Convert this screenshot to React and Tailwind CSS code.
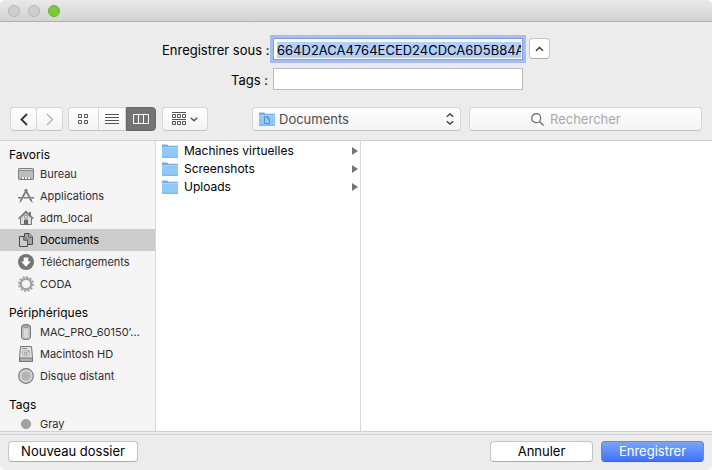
import { useState } from "react";

const DesktopIcon = () => (
  <svg width="16" height="16" viewBox="0 0 16 16">
    <rect x="0.5" y="2.5" width="15" height="11" rx="0.6" fill="#bdbdbd" stroke="#7c7c7c" />
    <path d="M1 3.5h14" stroke="#dcdcdc" />
    <path d="M1 4.5h14" stroke="#8a8a8a" />
    <path d="M3 11h10v2H3z" fill="#858585" />
    <path d="M4 11h2v2h-2zM7 11h2v2h-2zM10 11h2v2h-2z" fill="#f0f0f0" />
  </svg>
);

const ApplicationsIcon = () => (
  <svg width="16" height="16" viewBox="0 0 16 16" fill="none" stroke="#7c7c7c">
    <path d="M8.4 2L2.6 13M7.6 2l5.8 11" strokeWidth="1.8" />
    <path d="M0 9.8h3.4M5.6 9.8h5M12.8 9.8H16" strokeWidth="1.6" />
    <path d="M2.6 13l-1 1.7M13.4 13l1 1.7" strokeWidth="1" />
    <circle cx="8" cy="2.4" r="1.1" fill="#7c7c7c" />
  </svg>
);

const HomeIcon = () => (
  <svg width="16" height="16" viewBox="0 0 16 16" fill="none" stroke="#757575">
    <path d="M2.5 8v6.5h11V8L8 2.6z" fill="#dedede" />
    <path d="M12 2v4" strokeWidth="2" />
    <path d="M0.5 8.7L8 1.5l7.5 7.2" strokeWidth="1.3" />
    <circle cx="8" cy="6.7" r="1.5" fill="#f5f5f5" strokeWidth="0.9" />
    <path d="M6 9.5h4v5H6z" fill="#686868" stroke="none" />
  </svg>
);

const DocumentsIcon = () => (
  <svg width="16" height="16" viewBox="0 0 16 16" fill="#a4a4a4" stroke="#4c4c4c">
    <path d="M6.5 1.5h4.6l3.4 3.3v7.7h-8z" />
    <path d="M10.8 1.5v3.7h3.7" fill="#d0d0d0" />
    <path d="M1.5 4.5h4.6l3.4 3.3v6.7h-8z" fill="#cdcdcd" />
    <path d="M5.8 4.5v3.7h3.7" fill="#a4a4a4" />
  </svg>
);

const DownloadsIcon = () => (
  <svg width="16" height="16" viewBox="0 0 16 16">
    <circle cx="8" cy="8" r="8" fill="#757575" />
    <path d="M5.7 3.5h4.6v4h2.6L8 12.8 3.1 7.5h2.6z" fill="#fff" />
  </svg>
);

const GearIcon = () => (
  <svg width="16" height="16" viewBox="0 0 16 16" fill="none" stroke="#a3a3a3">
    <circle cx="8" cy="8" r="5.3" strokeWidth="2.4" />
    <circle cx="8" cy="8" r="7.1" strokeWidth="1.8" strokeDasharray="2.1 1.617" />
  </svg>
);

const ComputerIcon = () => (
  <svg width="16" height="16" viewBox="0 0 16 16" stroke="#757575">
    <path d="M3.5 2.5q0-2 4.5-2t4.5 2v11q0 2-4.5 2t-4.5-2z" fill="#c2c2c2" />
    <ellipse cx="8" cy="2.5" rx="3.6" ry="1.1" fill="#b4b4b4" stroke="#8a8a8a" strokeWidth="0.8" />
    <path d="M6 4.5h4v9H6z" fill="#d8d8d8" stroke="none" />
  </svg>
);

const HardDriveIcon = () => (
  <svg width="16" height="16" viewBox="0 0 16 16" fill="none" stroke="#777">
    <path d="M2.5 0.5h11l1 11v4h-13v-4z" fill="#e0e0e0" />
    <path d="M1.5 12h13v3.5h-13z" fill="#a8a8a8" />
    <path d="M3.5 13.8h9" stroke="#d0d0d0" strokeDasharray="1 1" />
    <path d="M4 2.5h5" strokeWidth="0.8" />
    <ellipse cx="8" cy="7.2" rx="4" ry="3" stroke="#aaa" strokeWidth="0.8" />
    <ellipse cx="7.6" cy="7.4" rx="1.6" ry="1.2" stroke="#888" strokeWidth="0.8" />
    <path d="M9 6.4l2.4-2" stroke="#888" strokeWidth="0.8" />
  </svg>
);

const DiscIcon = () => (
  <svg width="16" height="16" viewBox="0 0 16 16" fill="none" stroke="#777">
    <circle cx="8" cy="8" r="7.4" fill="#d2d2d2" strokeWidth="1.1" />
    <circle cx="8" cy="8" r="4" stroke="#999" strokeWidth="0.8" />
    <circle cx="8" cy="8" r="2.2" fill="#e8e8e8" stroke="#888" strokeWidth="0.9" />
    <circle cx="8" cy="8" r="0.7" strokeWidth="0.7" />
  </svg>
);

const TagIcon = () => (
  <svg width="16" height="16" viewBox="0 0 16 16">
    <circle cx="8" cy="8" r="4.6" fill="#a2a2a5" stroke="#8f8f92" strokeWidth="0.8" />
  </svg>
);

const FolderIcon = ({ withDocument }) => (
  <svg width="16" height="16" viewBox="0 0 16 16" className="shrink-0">
    <path d="M0 14V2.2Q0 1.4 .8 1.4h4.4l1.2 1.4h8.8q.8 0 .8.8V14z" fill="#6cb0e6" />
    <path d="M0 4h16v10H0z" fill="#90c8f8" />
    <path d="M0 4.5h16" stroke="#a9d6fb" />
    <path d="M0 14.4h16" stroke="#68a5d8" strokeWidth="0.9" />
    {withDocument && (
      <path d="M5.5 5.5h3l2 2v5h-5zM8.3 5.5v2.3h2.2" fill="none" stroke="#4b8fcb" strokeWidth="0.9" />
    )}
  </svg>
);

const sections = [
  {
    title: "Favoris",
    items: [
      { name: "Bureau", Icon: DesktopIcon },
      { name: "Applications", Icon: ApplicationsIcon },
      { name: "adm_local", Icon: HomeIcon },
      { name: "Documents", Icon: DocumentsIcon },
      { name: "Téléchargements", Icon: DownloadsIcon },
      { name: "CODA", Icon: GearIcon },
    ],
  },
  {
    title: "Périphériques",
    items: [
      { name: "MAC_PRO_60150’…", Icon: ComputerIcon },
      { name: "Macintosh HD", Icon: HardDriveIcon },
      { name: "Disque distant", Icon: DiscIcon },
    ],
  },
  {
    title: "Tags",
    items: [{ name: "Gray", Icon: TagIcon }],
  },
];

const folders = ["Machines virtuelles", "Screenshots", "Uploads"];

const toolButton =
  "flex h-6 items-center justify-center rounded-[4px] border border-[#d6d6d6] border-b-[#c4c4c4] bg-linear-to-b from-white to-[#f4f4f4]";

function TitleBar() {
  return (
    <header className="flex h-[22px] shrink-0 items-center gap-2 border-b border-[#b1b1b1] bg-linear-to-b from-[#e9e9e9] to-[#d2d2d2] px-2">
      <button aria-label="Fermer" className="size-3 rounded-full border border-[#b4b4b4] bg-[#cecece]" />
      <button aria-label="Réduire" className="size-3 rounded-full border border-[#b4b4b4] bg-[#cecece]" />
      <button aria-label="Agrandir" className="size-3 rounded-full border border-[#68b030] bg-[#78cb3b]" />
    </header>
  );
}

function NameForm() {
  const [name, setName] = useState("664D2ACA4764ECED24CDCA6D5B84A");
  const [tags, setTags] = useState("");

  return (
    <div className="flex flex-col gap-1.5 pt-4">
      <div className="flex justify-center">
        <label htmlFor="name" className="w-[106px] text-right leading-6 whitespace-nowrap">
          Enregistrer sous :
        </label>
        <div className="ml-[5px] h-[22px] w-[250px] border border-[#7f9fdc] bg-white ring-3 ring-[#a5bdf3]">
          <input
            id="name"
            value={name}
            onChange={(e) => setName(e.target.value)}
            className="block h-5 w-full bg-[#b3d0fd] bg-clip-content pt-[3px] pr-px pb-px pl-[3px] outline-none"
          />
        </div>
        <button
          aria-label="Réduire la fenêtre"
          className="ml-1.5 flex h-[21px] w-[21px] items-center justify-center rounded-[4px] border border-[#c6c6c6] border-b-[#adadad] bg-white"
        >
          <svg width="9" height="6" viewBox="0 0 9 6" fill="none" stroke="#333" strokeWidth="1.4">
            <path d="M1 4.8l3.5-3.3L8 4.8" />
          </svg>
        </button>
      </div>
      <div className="flex items-start justify-center pr-[27px]">
        <label htmlFor="tags" className="w-[106px] text-right leading-6">
          Tags :
        </label>
        <input
          id="tags"
          value={tags}
          onChange={(e) => setTags(e.target.value)}
          className="ml-[5px] h-[22px] w-[250px] border border-[#bcbcbc] bg-white px-1 outline-none"
        />
      </div>
    </div>
  );
}

function Toolbar() {
  return (
    <div className="flex px-2.5 pt-[15px] pb-[9px]">
      <button aria-label="Précédent" className={`${toolButton} w-[27px]`}>
        <svg width="8" height="13" viewBox="0 0 8 13" fill="none" stroke="#333" strokeWidth="1.8">
          <path d="M7 1L1.5 6.5 7 12" />
        </svg>
      </button>
      <button aria-label="Suivant" className={`${toolButton} -ml-px w-[27px]`}>
        <svg width="8" height="13" viewBox="0 0 8 13" fill="none" stroke="#b9b9b9" strokeWidth="1.5">
          <path d="M1 1l5.5 5.5L1 12" />
        </svg>
      </button>

      <div className="ml-[5px] flex">
        <button aria-label="Icônes" className={`${toolButton} w-[31px] rounded-r-none`}>
          <svg width="11" height="10" viewBox="0 0 11 10" fill="none" stroke="#555">
            <path d="M.5.5h3v3h-3zM6.5.5h3v3h-3zM.5 6.5h3v3h-3zM6.5 6.5h3v3h-3z" />
          </svg>
        </button>
        <button aria-label="Liste" className={`${toolButton} -ml-px w-7 rounded-none`}>
          <svg width="14" height="10" viewBox="0 0 14 10" stroke="#555">
            <path d="M0 .5h14M0 3.5h14M0 6.5h14M0 9.5h14" />
          </svg>
        </button>
        <button
          aria-label="Colonnes"
          aria-pressed="true"
          className="flex h-6 w-[30px] items-center justify-center rounded-r-[4px] border border-[#686868] bg-[#737373]"
        >
          <svg width="16" height="10" viewBox="0 0 16 10" fill="none" stroke="#fff">
            <path d="M.5.5h15v9H.5zM5.5.5v9M10.5.5v9" />
          </svg>
        </button>
      </div>

      <button aria-label="Grouper" className={`${toolButton} ml-1.5 w-[46px] gap-1`}>
        <svg width="14" height="14" viewBox="0 0 14 14" fill="none" stroke="#555">
          <path d="M0 .5h14M0 7.5h14" />
          <path d="M.5 2.5h3v3h-3zM5.5 2.5h3v3h-3zM10.5 2.5h3v3h-3z" />
          <path d="M.5 9.5h3v3h-3zM5.5 9.5h3v3h-3zM10.5 9.5h3v3h-3z" />
        </svg>
        <svg width="8" height="5" viewBox="0 0 8 5" fill="none" stroke="#555" strokeWidth="1.5">
          <path d="M.8.8L4 3.8 7.2.8" />
        </svg>
      </button>

      <div className={`${toolButton} ml-11 w-[209px] px-1.5`}>
        <FolderIcon withDocument />
        <select
          aria-label="Emplacement"
          defaultValue="Documents"
          className="ml-1 min-w-0 flex-1 appearance-none bg-transparent pt-0.5 text-[#4b4b4b] outline-none"
        >
          <option>Documents</option>
        </select>
        <svg width="8" height="12" viewBox="0 0 8 12" fill="none" stroke="#444" strokeWidth="1.4">
          <path d="M.8 3.8L4 .9l3.2 2.9M.8 8.2L4 11.1l3.2-2.9" />
        </svg>
      </div>

      <div className={`${toolButton} ml-2 min-w-0 flex-1 gap-1.5`}>
        <svg width="13" height="13" viewBox="0 0 13 13" fill="none" stroke="#666" strokeWidth="1.2">
          <circle cx="5.2" cy="5.2" r="4.5" />
          <path d="M8.5 8.5l4 4" />
        </svg>
        <input
          type="search"
          aria-label="Rechercher"
          placeholder="Rechercher"
          className="w-[90px] bg-transparent pt-0.5 outline-none placeholder:text-[#a9a9a9]"
        />
      </div>
    </div>
  );
}

function Sidebar({ selected, onSelect }) {
  return (
    <nav className="flex w-[156px] shrink-0 flex-col gap-2.5 overflow-hidden border-r border-[#d9d9d9] bg-[#f5f5f5] pt-1.5">
      {sections.map(({ title, items }) => (
        <section key={title} className="shrink-0">
          <h2 className="pl-[9px] text-[12px] leading-4">{title}</h2>
          <ul>
            {items.map(({ name, Icon }) => (
              <li key={name}>
                <button
                  onClick={() => onSelect(name)}
                  className={`flex h-[22px] w-full items-center gap-1.5 pl-[18px] text-[11px] whitespace-nowrap ${
                    selected === name ? "bg-[#cdcdcd] text-black" : "text-[#2e2e2e]"
                  }`}
                >
                  <Icon />
                  {name}
                </button>
              </li>
            ))}
          </ul>
        </section>
      ))}
    </nav>
  );
}

export default function App() {
  const [selected, setSelected] = useState("Documents");

  return (
    <div className="h-screen bg-white">
      <div className="flex h-full flex-col overflow-hidden rounded-[5px] bg-[#ececec] font-['Inter','Liberation_Sans',sans-serif] text-[13px] text-black">
        <TitleBar />
        <NameForm />
        <Toolbar />

        <main className="flex min-h-0 flex-1 border-y border-[#d0d0d0] bg-white">
          <Sidebar selected={selected} onSelect={setSelected} />
          <ul className="w-[205px] shrink-0 border-r border-[#d9d9d9] pt-px text-[12px]">
            {folders.map((folder) => (
              <li key={folder}>
                <button className="flex h-[18px] w-full items-center gap-1.5 pr-0.5 pl-1.5 text-left">
                  <FolderIcon />
                  <span className="flex-1">{folder}</span>
                  <svg width="6" height="8" viewBox="0 0 6 8" fill="#757575">
                    <path d="M0 0L6 4 0 8z" />
                  </svg>
                </button>
              </li>
            ))}
          </ul>
        </main>

        <footer className="mt-0.5 flex shrink-0 gap-2 border-t border-[#d0d0d0] px-2 pt-1.5 pb-2">
          <button className="mr-auto h-[21px] w-[130px] rounded-[4px] border border-[#c4c4c4] border-b-[#aeaeae] bg-white">
            Nouveau dossier
          </button>
          <button className="h-[21px] w-[103px] rounded-[4px] border border-[#c4c4c4] border-b-[#aeaeae] bg-white">
            Annuler
          </button>
          <button className="h-[21px] w-[103px] rounded-[4px] border border-[#5b87f0] border-b-[#3a62df] bg-linear-to-b from-[#79a5fa] to-[#4370fb] text-white">
            Enregistrer
          </button>
        </footer>
      </div>
    </div>
  );
}
